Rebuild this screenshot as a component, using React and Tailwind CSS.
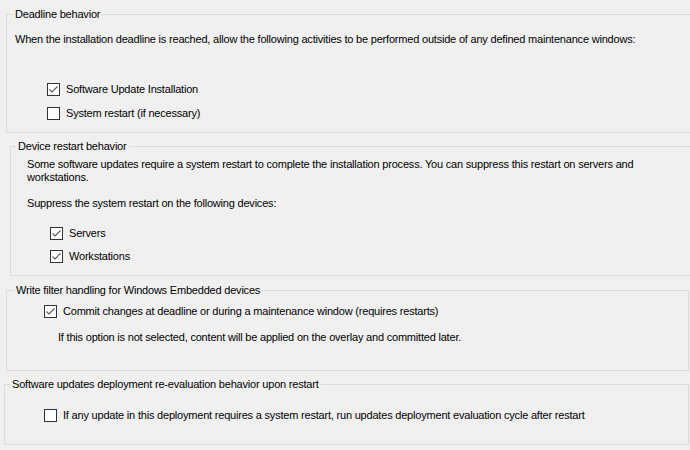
import React from "react";

function Box({ checked }) {
  return (
    <span className="inline-flex h-[13px] w-[13px] shrink-0 items-center justify-center border border-[#333333] bg-white">
      {checked && (
        <svg width="11" height="11" viewBox="0 0 11 11">
          <polyline points="1.5,5.5 4,8 9.5,2.5" fill="none" stroke="#555555" strokeWidth="1.1" />
        </svg>
      )}
    </span>
  );
}

function Check({ checked, label, className }) {
  return (
    <div className={"flex h-[15px] items-center gap-[6px] " + className}>
      <Box checked={checked} />
      <span>{label}</span>
    </div>
  );
}

export default function App() {
  return (
    <div className="h-[450px] w-[690px] overflow-hidden bg-[#f0f0f0] text-[11px] leading-[15px] tracking-[-0.2px] text-black font-['Liberation_Sans',Arial,sans-serif]">
      <fieldset className="ml-[6px] mt-[7px] w-[700px] border border-[#dcdcdc] pb-[11px]">
        <legend className="ml-[6px] px-[2px] leading-[15px]">Deadline behavior</legend>
        <div className="ml-[8px] mt-[10px] h-[15px] whitespace-nowrap">
          When the installation deadline is reached, allow the following activities to be performed outside of any defined maintenance windows:
        </div>
        <Check checked label="Software Update Installation" className="ml-[40px] mt-[35px]" />
        <Check label="System restart (if necessary)" className="ml-[40px] mt-[9px]" />
      </fieldset>

      <fieldset className="ml-[10px] mt-[6px] w-[700px] border border-[#dcdcdc] pb-[11px]">
        <legend className="ml-[5px] px-[2px] leading-[15px]">Device restart behavior</legend>
        <div className="ml-[16px] mt-[4px] w-[618px] leading-[13px]">
          Some software updates require a system restart to complete the installation process. You can suppress this restart on servers and workstations.
        </div>
        <div className="ml-[16px] mt-[12px] h-[15px]">Suppress the system restart on the following devices:</div>
        <Check checked label="Servers" className="ml-[39px] mt-[15px]" />
        <Check checked label="Workstations" className="ml-[39px] mt-[8px]" />
      </fieldset>

      <fieldset className="ml-[6px] mt-[7px] w-[683px] border border-[#dcdcdc] pb-[25px]">
        <legend className="ml-[7px] px-[2px] leading-[15px]">Write filter handling for Windows Embedded devices</legend>
        <Check checked label="Commit changes at deadline or during a maintenance window (requires restarts)" className="ml-[37px] mt-[6px]" />
        <div className="ml-[51px] mt-[11px] h-[15px]">
          If this option is not selected, content will be applied on the overlay and committed later.
        </div>
      </fieldset>

      <fieldset className="ml-[4px] mt-[6px] w-[685px] border border-[#dcdcdc] pb-[21px]">
        <legend className="ml-[5px] px-[2px] leading-[15px]">Software updates deployment re-evaluation behavior upon restart</legend>
        <Check label="If any update in this deployment requires a system restart, run updates deployment evaluation cycle after restart" className="ml-[39px] mt-[16px]" />
      </fieldset>
    </div>
  );
}
